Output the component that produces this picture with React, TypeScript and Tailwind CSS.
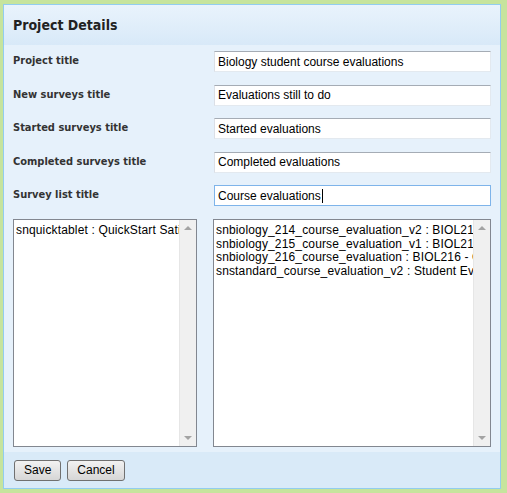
const labels = [
  ["Project title", "Biology student course evaluations"],
  ["New surveys title", "Evaluations still to do"],
  ["Started surveys title", "Started evaluations"],
  ["Completed surveys title", "Completed evaluations"],
  ["Survey list title", "Course evaluations"],
];

const leftItems = ["snquicktablet : QuickStart Satisfaction Survey"];
const rightItems = [
  "snbiology_214_course_evaluation_v2 : BIOL214 - Course Evaluation",
  "snbiology_215_course_evaluation_v1 : BIOL215 - Course Evaluation",
  "snbiology_216_course_evaluation : BIOL216 - Course Evaluation",
  "snstandard_course_evaluation_v2 : Student Evaluation of Teaching",
];

function ListBox({ items, width }: { items: string[]; width: string }) {
  return (
    <div className={`${width} h-[228px] flex border border-[#828790] bg-white`}>
      <div className="flex-1 min-w-0 overflow-hidden pl-[2px] pt-[4px] text-[12px] leading-[13.5px] tracking-[0.15px] text-black whitespace-nowrap">
        {items.map((it) => (
          <div key={it} className="overflow-hidden">{it}</div>
        ))}
      </div>
      <div className="w-[17px] shrink-0 flex flex-col justify-between items-center bg-[#f0f0f0] border-l border-[#e6e6e6] py-[6px]">
        <div className="w-0 h-0 border-l-[4px] border-r-[4px] border-b-[4px] border-l-transparent border-r-transparent border-b-[#a3a3a3]" />
        <div className="w-0 h-0 border-l-[4px] border-r-[4px] border-t-[4px] border-l-transparent border-r-transparent border-t-[#a3a3a3]" />
      </div>
    </div>
  );
}

export default function App() {
  return (
    <div className="w-[507px] h-[493px] bg-[#c6e49d] pt-[4px] pl-[3px] pr-[6px] pb-[4px] font-['Liberation_Sans',Arial,sans-serif]">
      <div className="h-full flex flex-col border border-[#92cdef] bg-[#e6f1fb]">
        <div className="h-[40px] flex items-center pl-[9px] bg-gradient-to-b from-[#e9f3fc] to-[#d8e9f8]">
          <h1 className="text-[14px] font-bold text-[#222] font-['DejaVu_Sans_Condensed','DejaVu_Sans',sans-serif]">
            Project Details
          </h1>
        </div>

        <div className="flex-1 px-[9px] pt-[6px]">
          <div className="flex flex-col gap-[12.5px]">
            {labels.map(([label, value], i) => (
              <div key={label} className="flex items-center h-[21px]">
                <label className="w-[201px] text-[11px] font-bold text-[#333] font-['DejaVu_Sans_Condensed','DejaVu_Sans',sans-serif]">
                  {label}
                </label>
                <div
                  className={`w-[277px] h-[21px] flex items-center bg-white pl-[3px] text-[12px] text-black border ${
                    i === 4
                      ? "border-[#7eb4ea]"
                      : "border-t-[#a5acb5] border-l-[#dbdfe6] border-r-[#e3e9ef] border-b-[#e3e9ef]"
                  }`}
                >
                  {value}
                  {i === 4 && <span className="w-px h-[14px] bg-black ml-px" />}
                </div>
              </div>
            ))}
          </div>

          <div className="flex justify-between mt-[13px]">
            <ListBox items={leftItems} width="w-[184px]" />
            <ListBox items={rightItems} width="w-[278px]" />
          </div>
        </div>

        <div className="h-[36px] flex items-center gap-[6px] pl-[10px] bg-[#d9eaf8]">
          <button className="h-[21px] px-[9px] rounded-[3px] border border-[#707070] bg-gradient-to-b from-[#f2f2f2] to-[#d6d6d6] text-[12px] text-black">
            Save
          </button>
          <button className="h-[21px] px-[9px] rounded-[3px] border border-[#707070] bg-gradient-to-b from-[#f2f2f2] to-[#d6d6d6] text-[12px] text-black">
            Cancel
          </button>
        </div>
      </div>
    </div>
  );
}
